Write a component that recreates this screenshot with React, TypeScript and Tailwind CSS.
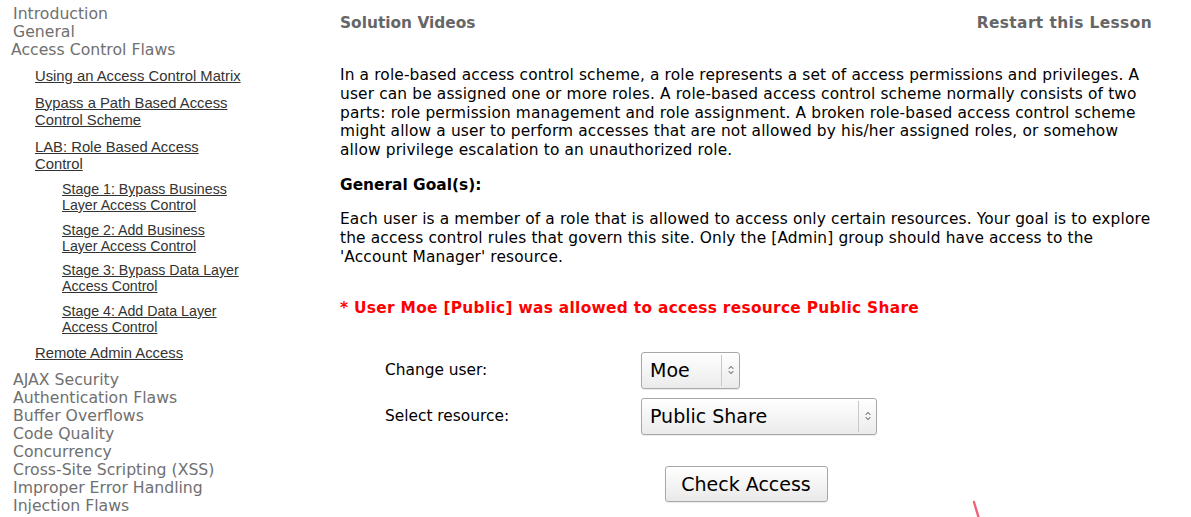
import React from "react";

const navTop = "block text-[15.7px] leading-[18px] text-[#707070] font-normal";
const linkCls = "underline text-[#333] decoration-[#333]";

function SelectBox({ value, width }: { value: string; width: string }) {
  return (
    <div
      className={`${width} h-[37px] flex items-stretch rounded-[3px] border border-[#a8a8a8] bg-gradient-to-b from-white to-[#ebebeb] shadow-[0_1px_1px_rgba(0,0,0,0.08)]`}
    >
      <div className="flex-1 flex items-center pl-[8px] pt-[1px] text-[19px] text-black">{value}</div>
      <div className="w-px bg-[#c8c8c8] my-[2px]" />
      <div className="w-[17px] flex items-center justify-center">
        <svg width="6" height="10" viewBox="0 0 6 10" fill="none" stroke="#444" strokeWidth="1">
          <path d="M0.8 3.8 L3 1.4 L5.2 3.8" />
          <path d="M0.8 6.2 L3 8.6 L5.2 6.2" />
        </svg>
      </div>
    </div>
  );
}

export default function App() {
  return (
    <div
      className="relative w-[1191px] h-[517px] overflow-hidden bg-white flex"
      style={{ fontFamily: '"DejaVu Sans", Verdana, sans-serif' }}
    >
      {/* Left nav */}
      <nav className="w-[340px] shrink-0 pt-[5px]">
        <span className={`${navTop} pl-[13px]`}>Introduction</span>
        <span className={`${navTop} pl-[13px]`}>General</span>
        <span className={`${navTop} pl-[11px]`}>Access Control Flaws</span>
        <ul
          className="w-[244px]"
          style={{ fontFamily: '"Liberation Sans", Arial, sans-serif' }}
        >
          <li className="pl-[35px] text-[14.8px] leading-[17px] mt-[8.5px]">
            <a className={linkCls}>Using an Access Control Matrix</a>
          </li>
          <li className="pl-[35px] text-[14.8px] leading-[17px] mt-[10px]">
            <a className={linkCls}>Bypass a Path Based Access Control Scheme</a>
          </li>
          <li className="pl-[35px] text-[14.8px] leading-[17px] mt-[10px]">
            <a className={linkCls}>LAB: Role Based Access Control</a>
          </li>
          <li className="pl-[62px] text-[14.2px] leading-[16px] mt-[8.5px]">
            <a className={linkCls}>Stage 1: Bypass Business Layer Access Control</a>
          </li>
          <li className="pl-[62px] text-[14.2px] leading-[16px] mt-[9px]">
            <a className={linkCls}>Stage 2: Add Business Layer Access Control</a>
          </li>
          <li className="pl-[62px] text-[14.2px] leading-[16px] mt-[8px]">
            <a className={linkCls}>Stage 3: Bypass Data Layer Access Control</a>
          </li>
          <li className="pl-[62px] text-[14.2px] leading-[16px] mt-[9px]">
            <a className={linkCls}>Stage 4: Add Data Layer Access Control</a>
          </li>
          <li className="pl-[35px] text-[14.8px] leading-[17px] mt-[9.5px]">
            <a className={linkCls}>Remote Admin Access</a>
          </li>
        </ul>
        <div className="mt-[9.5px]">
          {[
            "AJAX Security",
            "Authentication Flaws",
            "Buffer Overflows",
            "Code Quality",
            "Concurrency",
            "Cross-Site Scripting (XSS)",
            "Improper Error Handling",
            "Injection Flaws",
          ].map((t) => (
            <span key={t} className={`${navTop} pl-[13px]`}>
              {t}
            </span>
          ))}
        </div>
      </nav>

      {/* Main */}
      <main className="flex-1 pr-[39px] pt-[14px] text-[15.4px] leading-[18.75px] text-black">
        <div className="flex justify-between font-bold text-[#666] leading-[18px]">
          <span>Solution Videos</span>
          <span className="tracking-[0.4px]">Restart this Lesson</span>
        </div>
        <p className="mt-[34px] tracking-[0.14px]">
          In a role-based access control scheme, a role represents a set of access permissions and
          privileges. A user can be assigned one or more roles. A role-based access control scheme
          normally consists of two parts: role permission management and role assignment. A broken
          role-based access control scheme might allow a user to perform accesses that are not
          allowed by his/her assigned roles, or somehow allow privilege escalation to an
          unauthorized role.
        </p>
        <p className="mt-[16.5px] font-bold">General Goal(s):</p>
        <p className="mt-[15px] tracking-[0.14px]">
          Each user is a member of a role that is allowed to access only certain resources. Your
          goal is to explore the access control rules that govern this site. Only the [Admin] group
          should have access to the 'Account Manager' resource.
        </p>
        <p className="mt-[33px] font-bold text-[#f00] tracking-[0.3px]">
          * User Moe [Public] was allowed to access resource Public Share
        </p>

        <div className="mt-[33.5px] ml-[45px] grid grid-cols-[256px_auto] gap-y-[9px] items-center justify-start">
          <span>Change user:</span>
          <SelectBox value="Moe" width="w-[99px]" />
          <span>Select resource:</span>
          <SelectBox value="Public Share" width="w-[236px]" />
        </div>

        <div className="mt-[31px] flex justify-center">
          <button className="w-[163px] h-[36px] rounded-[3px] border border-[#a8a8a8] bg-gradient-to-b from-white to-[#e9e9e9] pt-[1px] text-[19px] text-black shadow-[0_1px_1px_rgba(0,0,0,0.08)]">
            Check Access
          </button>
        </div>
      </main>

      <svg
        className="absolute left-[968px] top-[500px]"
        width="16"
        height="17"
        viewBox="0 0 16 17"
        fill="none"
      >
        <path d="M6 2 Q8 9 10.5 17" stroke="#ee3a55" strokeWidth="2.4" strokeLinecap="round" opacity="0.8" />
      </svg>
    </div>
  );
}
